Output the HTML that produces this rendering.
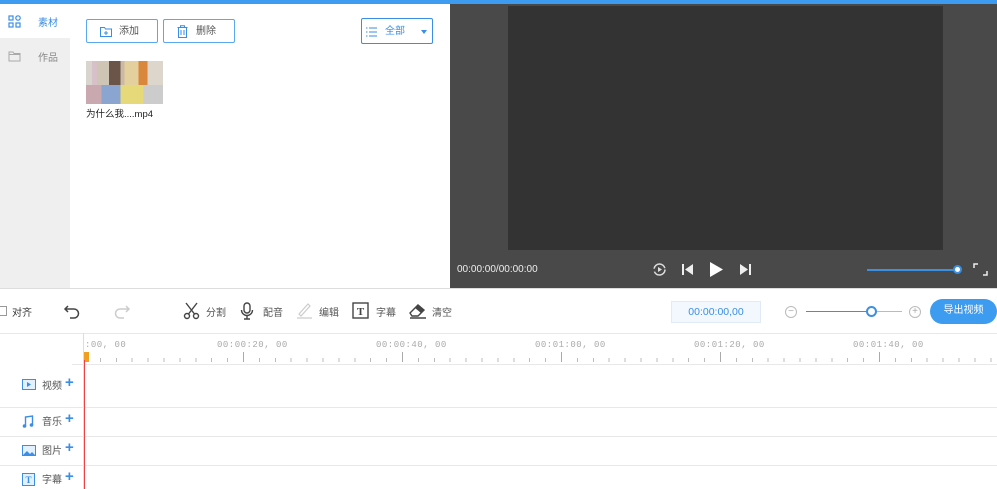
<!DOCTYPE html>
<html><head><meta charset="utf-8"><style>
*{margin:0;padding:0;box-sizing:border-box}
body{width:997px;height:489px;overflow:hidden;background:#fff;font-family:"Liberation Sans","Noto Sans CJK SC",sans-serif;font-size:10px;color:#333;position:relative}
.a{position:absolute}
.btn{position:absolute;border:1px solid #5aa8f0;border-radius:2px;height:24px;top:19px;color:#555;font-size:10px;line-height:22px}
.btn span{top:1px}
.tl{position:absolute;font-size:10px;color:#555}
.rl{position:absolute;top:340px;font-size:9px;color:#aaa;font-family:"Liberation Mono",monospace;letter-spacing:0.5px}
.hl{position:absolute;left:0;width:997px;height:1px;background:#e8e8e8}
.plus{color:#3a8ee6;font-size:15px;font-weight:bold}
</style></head><body>
<div class="a" style="left:0;top:0;width:997px;height:4px;background:#3d9bf0"></div>
<div class="a" style="left:0;top:38px;width:70px;height:250px;background:#efefef"></div>
<svg class="a" style="left:8px;top:15px" width="13" height="13"><g fill="none" stroke="#3a8ee6" stroke-width="1.2"><rect x="1" y="1" width="4" height="4"/><rect x="1" y="8" width="4" height="4"/><rect x="8" y="8" width="4" height="4"/><circle cx="10" cy="3" r="2.2"/></g></svg>
<div class="a" style="left:38px;top:14px;color:#3a8ee6;font-size:10px">素材</div>
<svg class="a" style="left:8px;top:50px" width="13" height="12"><path d="M1 2h4l1 1.5h6V11H1z M1 4.5h11" fill="none" stroke="#aaa" stroke-width="1"/></svg>
<div class="a" style="left:38px;top:49px;color:#888;font-size:10px">作品</div>
<div class="btn" style="left:86px;width:72px"><svg class="a" style="left:13px;top:6px" width="12" height="11"><path d="M0.5 1.5h4l1 1.5h6v7.5h-11z M6 5v4 M4 7h4" fill="none" stroke="#3a8ee6" stroke-width="1"/></svg><span class="a" style="left:32px">添加</span></div>
<div class="btn" style="left:163px;width:72px"><svg class="a" style="left:13px;top:5px" width="11" height="13"><path d="M0.5 2.5h10 M3.5 2.5V0.8h4v1.7 M1.5 2.5v10h8v-10 M4 5v5 M7 5v5" fill="none" stroke="#3a8ee6" stroke-width="1"/></svg><span class="a" style="left:32px">删除</span></div>
<div class="btn" style="left:361px;width:72px;height:26px;top:18px;border-color:#3a8ee6"><svg class="a" style="left:4px;top:8px" width="11" height="10"><path d="M0 1h1.5M3 1h8M0 5h1.5M3 5h8M0 9h1.5M3 9h8" stroke="#3a8ee6" stroke-width="1"/></svg><span class="a" style="left:23px;top:2px;color:#3a8ee6">全部</span><div class="a" style="left:59px;top:11px;border:3px solid transparent;border-top:4px solid #3a8ee6"></div></div>
<div class="a" style="left:86px;top:61px;width:77px;height:43px;background:linear-gradient(90deg,#d8d4ce 0 8%,#d8c0c8 8% 14%,#cfc5b5 14% 30%,#6a5548 30% 45%,#cbb8a5 45% 50%,#e3d09c 50% 68%,#d8873c 68% 80%,#ddd6cc 80%);overflow:hidden"><div class="a" style="left:0;top:24px;width:77px;height:19px;background:linear-gradient(90deg,#c9a8b0 0 20%,#8aa5d0 20% 45%,#e5d97a 45% 75%,#ccc 75%)"></div></div>
<div class="a" style="left:86px;top:106px;font-size:9.5px;color:#222">为什么我....mp4</div>
<div class="a" style="left:450px;top:4px;width:547px;height:284px;background:#494949"></div>
<div class="a" style="left:508px;top:6px;width:435px;height:244px;background:#333"></div>
<div class="a" style="left:457px;top:264px;color:#eee;font-size:10px">00:00:00/00:00:00</div>
<svg class="a" style="left:652px;top:262px" width="15" height="15"><circle cx="7.5" cy="7.5" r="5.5" fill="none" stroke="#ddd" stroke-width="1.5" stroke-dasharray="15 3"/><path d="M6 5v5l4-2.5z" fill="#ddd"/></svg>
<svg class="a" style="left:681px;top:263px" width="13" height="13"><path d="M1 1h2v11H1z M12 1v11L4 6.5z" fill="#eee"/></svg>
<svg class="a" style="left:709px;top:261px" width="15" height="17"><path d="M1 1v15l13-7.5z" fill="#fff"/></svg>
<svg class="a" style="left:739px;top:263px" width="13" height="13"><path d="M1 1v11l8-5.5z M10 1h2v11h-2z" fill="#eee"/></svg>
<div class="a" style="left:867px;top:269px;width:90px;height:1.5px;background:#3d8fe0"></div>
<div class="a" style="left:953px;top:265px;width:9px;height:9px;border-radius:50%;background:#fff;border:2px solid #3d8fe0"></div>
<svg class="a" style="left:973px;top:263px" width="15" height="13"><path d="M1 5V1h4 M10 12h4V8" fill="none" stroke="#eee" stroke-width="1.5"/></svg>
<div class="hl" style="top:288px;background:#ddd;height:1px"></div>
<div class="a" style="left:-3px;top:306px;width:10px;height:10px;border:1px solid #999;background:#fff"></div>
<div class="tl" style="left:12px;top:304px;color:#333">对齐</div>
<svg class="a" style="left:63px;top:304px" width="18" height="15"><path d="M5 2L2 5l3 3 M2 5h9a4.5 4.5 0 0 1 0 9H7" fill="none" stroke="#444" stroke-width="1.5"/></svg>
<svg class="a" style="left:113px;top:304px" width="18" height="15"><path d="M13 2l3 3-3 3 M16 5H7a4.5 4.5 0 0 0 0 9h4" fill="none" stroke="#ccc" stroke-width="1.5"/></svg>
<svg class="a" style="left:183px;top:302px" width="17" height="18"><g fill="none" stroke="#444" stroke-width="1.4"><circle cx="4" cy="14" r="2.5"/><circle cx="13" cy="14" r="2.5"/><path d="M5.5 12L14 1 M11.5 12L3 1"/></g></svg>
<div class="tl" style="left:206px;top:304px">分割</div>
<svg class="a" style="left:240px;top:302px" width="14" height="18"><g fill="none" stroke="#444" stroke-width="1.4"><rect x="4" y="1" width="6" height="10" rx="3"/><path d="M1.5 8a5.5 5.5 0 0 0 11 0 M7 13.5v3 M4 17h6"/></g></svg>
<div class="tl" style="left:263px;top:304px">配音</div>
<svg class="a" style="left:296px;top:302px" width="17" height="17"><path d="M3 12L12 2l2 2-9 10z M1 16h15" fill="none" stroke="#ccc" stroke-width="1.2"/></svg>
<div class="tl" style="left:319px;top:304px">编辑</div>
<svg class="a" style="left:352px;top:302px" width="17" height="17"><rect x="1" y="1" width="15" height="15" fill="none" stroke="#444" stroke-width="1.4"/><text x="8.5" y="13" font-size="11" font-weight="bold" text-anchor="middle" fill="#444" font-family="Liberation Serif">T</text></svg>
<div class="tl" style="left:376px;top:304px">字幕</div>
<svg class="a" style="left:409px;top:302px" width="18" height="17"><path d="M1 11L9 3l6 5-6 6H3z M7 5l6 6 M1 16h16" fill="none" stroke="#444" stroke-width="1.4"/><path d="M9 3l6 5-3 3-6-5z" fill="#444"/></svg>
<div class="tl" style="left:432px;top:304px">清空</div>
<div class="a" style="left:671px;top:301px;width:90px;height:22px;background:#f3f8fe;border:1px solid #e0ebf7;color:#3a8ee6;font-size:10.5px;line-height:20px;text-align:center">00:00:00,00</div>
<div class="a" style="left:785px;top:306px;width:12px;height:12px;border:1px solid #bbb;border-radius:50%;color:#aaa;font-size:10px;line-height:9px;text-align:center">−</div>
<div class="a" style="left:806px;top:311px;width:66px;height:1px;background:#3d8fe0"></div>
<div class="a" style="left:872px;top:311px;width:30px;height:1px;background:#bbb"></div>
<div class="a" style="left:866px;top:306px;width:11px;height:11px;border-radius:50%;background:#fff;border:2px solid #3d8fe0"></div>
<div class="a" style="left:909px;top:306px;width:12px;height:12px;border:1px solid #bbb;border-radius:50%;color:#aaa;font-size:10px;line-height:10px;text-align:center">+</div>
<div class="a" style="left:930px;top:299px;width:67px;height:25px;border-radius:13px;background:#3d9bf0;color:#fff;font-size:10px;line-height:24px;text-align:center">导出视频</div>
<div class="hl" style="top:333px;left:0;width:997px"></div>
<div class="a" style="left:83px;top:333px;width:1px;height:156px;background:#ddd"></div>
<div class="rl" style="left:85px">:00, 00</div>
<div class="rl" style="left:217px">00:00:20, 00</div>
<div class="rl" style="left:376px">00:00:40, 00</div>
<div class="rl" style="left:535px">00:01:00, 00</div>
<div class="rl" style="left:694px">00:01:20, 00</div>
<div class="rl" style="left:853px">00:01:40, 00</div>
<div class="a" style="left:84px;top:358px;width:913px;height:4px;background:repeating-linear-gradient(90deg,#bbb 0 1px,transparent 1px 15.9px)"></div>
<div class="a" style="left:84px;top:352px;width:913px;height:10px;background:repeating-linear-gradient(90deg,#aaa 0 1px,transparent 1px 159px)"></div>
<div class="hl" style="top:364px;left:72px;width:925px"></div>
<div class="hl" style="top:407px"></div>
<div class="hl" style="top:436px"></div>
<div class="hl" style="top:465px"></div>
<div class="a" style="left:84px;top:352px;width:5px;height:10px;background:#f0a020"></div>
<div class="a" style="left:84px;top:360px;width:1px;height:129px;background:#f04040"></div>
<svg class="a" style="left:22px;top:379px" width="14" height="12"><rect x="0.5" y="0.5" width="13" height="10" fill="#e3f0fd" stroke="#3a8ee6"/><path d="M5 3v5l4-2.5z" fill="#3a8ee6"/></svg>
<div class="tl" style="left:42px;top:377px">视频</div><div class="a plus" style="left:65px;top:374px">+</div>
<svg class="a" style="left:22px;top:415px" width="12" height="13"><path d="M3.5 11V2l7-1v9" fill="none" stroke="#3a8ee6" stroke-width="1.4"/><circle cx="2.5" cy="11" r="1.8" fill="#3a8ee6"/><circle cx="9.5" cy="10" r="1.8" fill="#3a8ee6"/></svg>
<div class="tl" style="left:42px;top:413px">音乐</div><div class="a plus" style="left:65px;top:410px">+</div>
<svg class="a" style="left:22px;top:445px" width="14" height="11"><rect x="0.5" y="0.5" width="13" height="10" fill="#e3f0fd" stroke="#3a8ee6"/><path d="M1 10l4-4 3 3 2-2 3 3z" fill="#3a8ee6"/></svg>
<div class="tl" style="left:42px;top:442px">图片</div><div class="a plus" style="left:65px;top:439px">+</div>
<svg class="a" style="left:22px;top:473px" width="13" height="13"><rect x="0.5" y="0.5" width="12" height="12" fill="#e3f0fd" stroke="#3a8ee6"/><text x="6.5" y="10" font-size="9" font-weight="bold" text-anchor="middle" fill="#3a8ee6" font-family="Liberation Serif">T</text></svg>
<div class="tl" style="left:42px;top:471px">字幕</div><div class="a plus" style="left:65px;top:468px">+</div>
</body></html>
